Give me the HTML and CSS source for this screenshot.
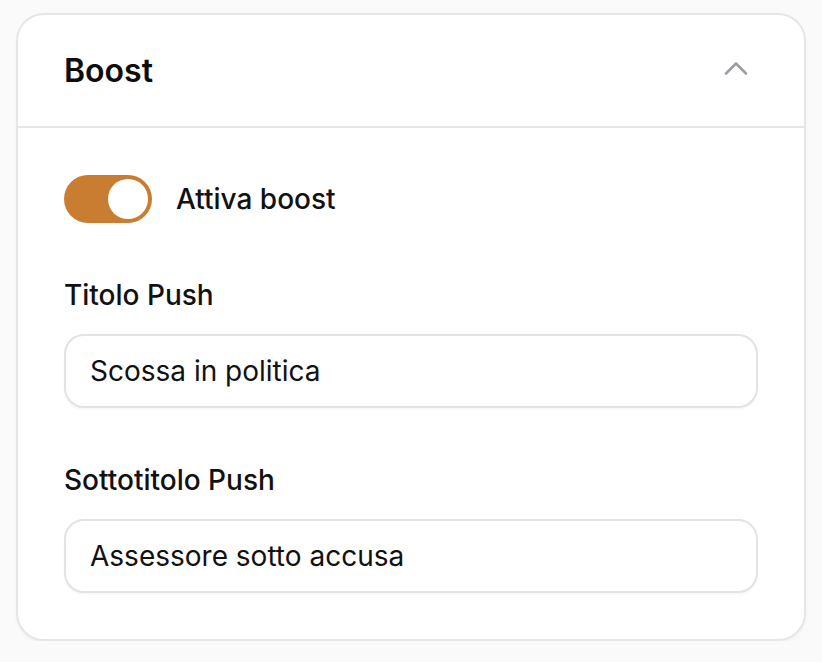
FILE: index.html
```html
<!DOCTYPE html>
<html lang="it">
<head>
<meta charset="utf-8">
<title>Boost</title>
<link rel="stylesheet" href="styles.css">
</head>
<body>
<div class="page">
  <section class="card">
    <header class="card-header">
      <h2 class="card-title">Boost</h2>
      <svg class="chevron" width="24" height="14" viewBox="0 0 24 14" aria-hidden="true">
        <path d="M2 11.5 L12 1.5 L22 11.5" fill="none" stroke="#9d9da6" stroke-width="2.6" stroke-linecap="round" stroke-linejoin="round"/>
      </svg>
    </header>
    <div class="card-body">
      <label class="toggle-row">
        <span class="toggle"><span class="knob"></span></span>
        <span class="toggle-label">Attiva boost</span>
      </label>
      <div class="field">
        <div class="field-label">Titolo Push</div>
        <input class="field-input" type="text" value="Scossa in politica">
      </div>
      <div class="field">
        <div class="field-label">Sottotitolo Push</div>
        <input class="field-input" type="text" value="Assessore sotto accusa">
      </div>
    </div>
  </section>
</div>
</body>
</html>
```

FILE: styles.css
```css
html, body {
  margin: 0;
  padding: 0;
  background: #fafafa;
}

body {
  font-family: Inter, "Noto Sans", "Liberation Sans", sans-serif;
  color: #111111;
}

.page {
  padding: 13px 16px 0 16px;
}

.card {
  width: 790px;
  box-sizing: border-box;
  background: #ffffff;
  border: 2px solid #e6e6e6;
  border-radius: 28px;
  box-shadow: 0 2px 3px rgba(0, 0, 0, 0.04);
}

.card-header {
  height: 111px;
  display: flex;
  align-items: center;
  justify-content: space-between;
  padding: 0 46px;
  border-bottom: 2px solid #e6e6e6;
}

.card-title {
  margin: 0;
  font-size: 32px;
  line-height: 40px;
  font-weight: 600;
  color: #0d0d0d;
}

.chevron {
  display: block;
  margin-right: 10px;
  margin-bottom: 3px;
}

.card-body {
  display: flex;
  flex-direction: column;
  gap: 52px;
  padding: 47px 46px 46px 46px;
}

.toggle-row {
  display: flex;
  align-items: center;
  gap: 24px;
  height: 48px;
}

.toggle {
  width: 88px;
  height: 48px;
  box-sizing: border-box;
  border-radius: 24px;
  background: #c97d30;
  display: flex;
  align-items: center;
  justify-content: flex-end;
  padding: 4px;
}

.knob {
  width: 40px;
  height: 40px;
  border-radius: 50%;
  background: #ffffff;
}

.toggle-label {
  font-size: 28px;
  line-height: 40px;
  font-weight: 500;
  color: #111111;
}

.field {
  display: flex;
  flex-direction: column;
  gap: 19px;
}

.field-label {
  font-size: 28px;
  line-height: 40px;
  font-weight: 500;
  color: #111111;
}

.field-input {
  display: block;
  width: 100%;
  height: 74px;
  box-sizing: border-box;
  margin: 0;
  padding: 0 24px;
  border: 2px solid #e3e3e3;
  border-radius: 20px;
  background: #ffffff;
  box-shadow: 0 2px 2px rgba(0, 0, 0, 0.03);
  font-family: inherit;
  font-size: 28px;
  font-weight: 400;
  color: #111111;
  outline: none;
}
```
